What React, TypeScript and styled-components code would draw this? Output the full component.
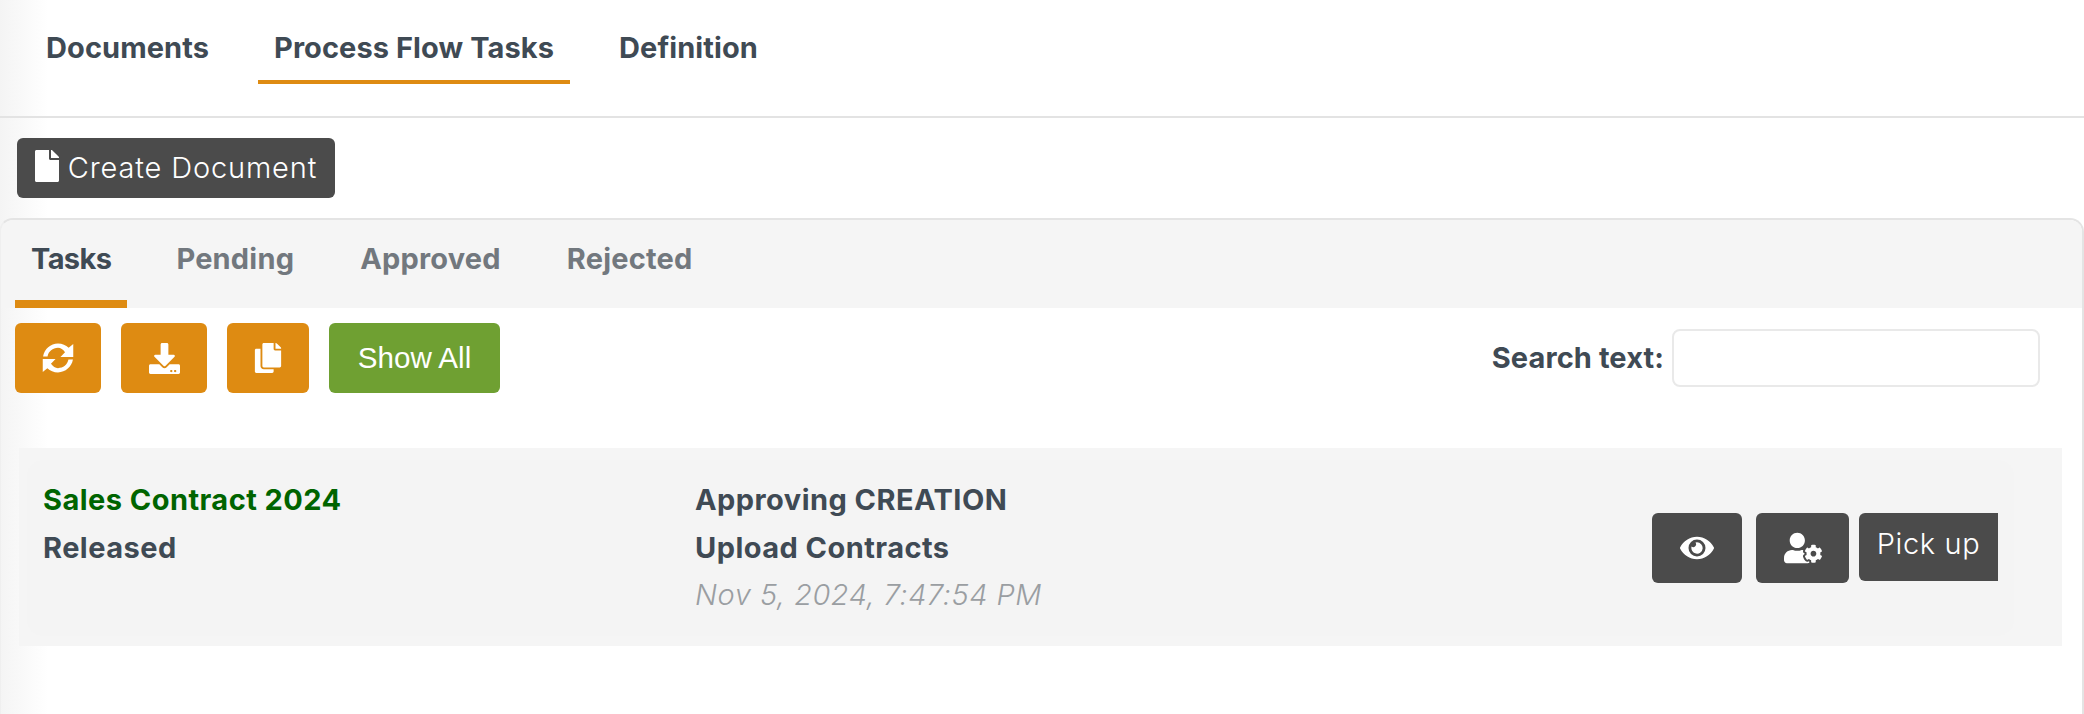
import React from "react";
import styled, { createGlobalStyle } from "styled-components";
import { FaCopy, FaDownload, FaEye, FaFile, FaUserCog } from "react-icons/fa";

const GlobalStyle = createGlobalStyle`
  html, body { margin: 0; padding: 0; }
  body {
    height: 714px;
    overflow: hidden;
    background: linear-gradient(to right, #f4f4f4 0, #fbfbfb 30px, #ffffff 48px);
    font-family: "Inter", "Liberation Sans", sans-serif;
    color: #3f4a54;
  }
`;

const Page = styled.div`
  display: flex;
  flex-direction: column;
  height: 714px;
`;

const MainNav = styled.nav`
  display: flex;
  gap: 33px;
  padding: 14px 0 0 30px;
  height: 102px;
  border-bottom: 2px solid #e3e3e3;
`;

const MainTab = styled.div<{ $active?: boolean }>`
  height: 66px;
  line-height: 68px;
  padding: 0 16px;
  font-size: 29px;
  font-weight: 700;
  letter-spacing: 0.08px;
  border-bottom: 4px solid ${(p) => (p.$active ? "#de8b12" : "transparent")};
`;

const ActionBar = styled.div`
  display: flex;
  padding: 20px 0 20px 17px;
`;

const DarkButton = styled.button`
  display: inline-flex;
  align-items: center;
  justify-content: center;
  border: 0;
  padding: 0;
  color: #fff;
  background: #4b4b4b;
  border-radius: 6px;
  font-family: "Inter", "Liberation Sans", sans-serif;
  font-size: 29px;
  font-weight: 300;
  letter-spacing: 0.6px;
`;

const CreateButton = styled(DarkButton)`
  width: 318px;
  height: 60px;
  gap: 9px;
  padding-bottom: 2px;
  letter-spacing: 0.85px;
  svg { width: 24px; height: 32px; margin-top: -2px; }
`;

const Card = styled.section`
  flex: 1;
  margin-left: -1px;
  border: solid #e4e4e4;
  border-width: 2px 2px 0 2px;
  border-left-color: #efefef;
  border-radius: 14px 14px 0 0;
  overflow: hidden;
`;

const SubNav = styled.div`
  display: flex;
  gap: 32px;
  height: 88px;
  padding-left: 14px;
  background: #f5f5f5;
`;

const SubTab = styled.div<{ $active?: boolean }>`
  height: 80px;
  line-height: 78px;
  padding: 0 ${(p) => (p.$active ? "16px" : "17px")};
  font-size: 29px;
  font-weight: 700;
  letter-spacing: ${(p) => (p.$active ? "-0.6px" : "0.2px")};
  color: ${(p) => (p.$active ? "#3f4a54" : "#72787e")};
  border-bottom: 8px solid ${(p) => (p.$active ? "#de8b12" : "transparent")};
`;

const Toolbar = styled.div`
  display: flex;
  align-items: center;
  height: 70px;
  padding: 15px 42px 55px 14px;
`;

const ToolButton = styled.button<{ $width: number; $color?: string }>`
  display: inline-flex;
  align-items: center;
  justify-content: center;
  width: ${(p) => p.$width}px;
  height: 70px;
  margin-right: 20px;
  padding: 0;
  border: 0;
  border-radius: 6px;
  color: #fff;
  background: ${(p) => p.$color ?? "#de8b12"};
  font-family: "Liberation Sans", Arial, sans-serif;
  font-size: 29.6px;
`;

const SearchGroup = styled.label`
  display: flex;
  align-items: center;
  gap: 8px;
  margin-left: auto;
  font-size: 29px;
  font-weight: 700;
  letter-spacing: 0.1px;
`;

const SearchText = styled.span`
  padding-bottom: 2px;
`;

const SearchInput = styled.input`
  box-sizing: border-box;
  width: 368px;
  height: 58px;
  background: #fff;
  border: 2px solid #e9e9e9;
  border-radius: 8px;
`;

const ListRow = styled.div`
  margin-left: 18px;
  width: 2043px;
  height: 198px;
  box-sizing: border-box;
  padding: 12px 48px 10px 8px;
  background: #f5f5f5;
`;

const Task = styled.div`
  display: flex;
  align-items: center;
  height: 176px;
  padding: 16px;
  box-sizing: border-box;
  background: #f4f4f4;
  border-radius: 16px;
`;

const TaskColumn = styled.div<{ $width: number }>`
  align-self: flex-start;
  width: ${(p) => p.$width}px;
`;

const TaskLine = styled.div<{ $green?: boolean }>`
  height: 48px;
  line-height: 48px;
  font-size: 29px;
  font-weight: 700;
  letter-spacing: 0.45px;
  color: ${(p) => (p.$green ? "#006400" : "#3f4a54")};
`;

const TaskDate = styled.div`
  height: 48px;
  line-height: 46px;
  font-size: 29px;
  font-style: italic;
  font-weight: 300;
  letter-spacing: 0.5px;
  color: #9a9ea2;
`;

const RowActions = styled.div`
  display: flex;
  align-items: flex-start;
  margin-left: auto;
`;

const IconButton = styled(DarkButton)<{ $width: number; $gap: number }>`
  width: ${(p) => p.$width}px;
  height: 70px;
  margin-right: ${(p) => p.$gap}px;
`;

const PickUp = styled(DarkButton)`
  width: 139px;
  height: 68px;
  padding-bottom: 8px;
  border-radius: 6px 0 0 6px;
`;

const arrowArc =
  "M1 13.5C2.2 6.7 8 1.5 15 1.5c4 0 7.4 1.7 10 4l4.3-3.7V14h-12l4.3-4.4C19.7 7 17.6 5.5 15 5.5c-5 0-8.8 3.3-9.8 8z";

const RefreshIcon = () => (
  <svg width="32" height="32" viewBox="0 0 30 30" fill="currentColor" aria-hidden="true">
    <path d={arrowArc} />
    <path d={arrowArc} transform="rotate(180 15 15)" />
  </svg>
);

const App = () => (
  <>
    <GlobalStyle />
    <Page>
      <MainNav>
        <MainTab>Documents</MainTab>
        <MainTab $active>Process Flow Tasks</MainTab>
        <MainTab>Definition</MainTab>
      </MainNav>
      <ActionBar>
        <CreateButton>
          <FaFile />
          Create Document
        </CreateButton>
      </ActionBar>
      <Card>
        <SubNav>
          <SubTab $active>Tasks</SubTab>
          <SubTab>Pending</SubTab>
          <SubTab>Approved</SubTab>
          <SubTab>Rejected</SubTab>
        </SubNav>
        <Toolbar>
          <ToolButton $width={86}><RefreshIcon /></ToolButton>
          <ToolButton $width={86}><FaDownload size={31} /></ToolButton>
          <ToolButton $width={82}><FaCopy size={30} /></ToolButton>
          <ToolButton $width={171} $color="#6fa032">Show All</ToolButton>
          <SearchGroup>
            <SearchText>Search text:</SearchText>
            <SearchInput />
          </SearchGroup>
        </Toolbar>
        <ListRow>
          <Task>
            <TaskColumn $width={652}>
              <TaskLine $green>Sales Contract 2024</TaskLine>
              <TaskLine>Released</TaskLine>
            </TaskColumn>
            <TaskColumn $width={500}>
              <TaskLine>Approving CREATION</TaskLine>
              <TaskLine>Upload Contracts</TaskLine>
              <TaskDate>Nov 5, 2024, 7:47:54 PM</TaskDate>
            </TaskColumn>
            <RowActions>
              <IconButton $width={90} $gap={14}><FaEye size={34} /></IconButton>
              <IconButton $width={93} $gap={10}><FaUserCog size={38} /></IconButton>
              <PickUp>Pick up</PickUp>
            </RowActions>
          </Task>
        </ListRow>
      </Card>
    </Page>
  </>
);

export default App;
